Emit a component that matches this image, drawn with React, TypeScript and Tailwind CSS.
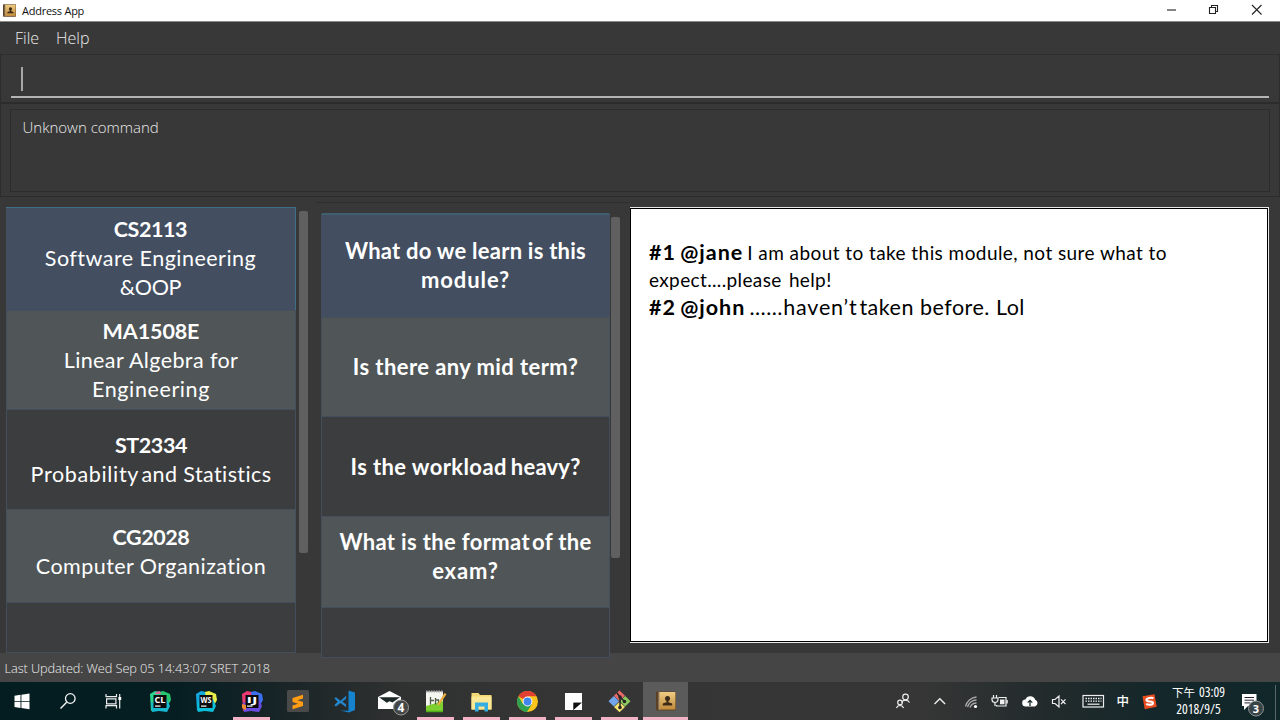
import type { ReactNode } from "react";

function AddressBookIcon({ className }: { className?: string }) {
  return (
    <svg viewBox="0 0 20 20" className={className}>
      <defs>
        <linearGradient id="cover" x1="0" y1="0" x2="0" y2="1">
          <stop offset="0" stopColor="#f0cd84" />
          <stop offset="1" stopColor="#c08a3a" />
        </linearGradient>
      </defs>
      <rect x="0" y="0.5" width="20" height="19" rx="1" fill="#5b4025" />
      <rect x="3.4" y="1" width="16" height="17.6" fill="url(#cover)" />
      <rect x="2.6" y="0.8" width="1" height="18" fill="#c9b08a" />
      <circle cx="11.5" cy="7.6" r="2.5" fill="#3b2a17" />
      <path d="M10.5 9h2v2.2l3.7 1.2v2H6.8v-2l3.7-1.2z" fill="#3b2a17" />
    </svg>
  );
}

type Row = { box: string; lines: ReactNode[] };

const modules: Row[] = [
  {
    box: "h-[103px] bg-[#434e60] pt-[7px] border-t border-r border-t-[#3f6f85] border-r-[#3f6f85]",
    lines: [
      <b className="tracking-[-0.02em]">CS2113</b>,
      <span className="tracking-[0.48px]">Software Engineering</span>,
      <span className="tracking-[-0.3px]">&amp;OOP</span>,
    ],
  },
  {
    box: "h-[99px] bg-[#505657] pt-[6px] border-x border-t border-[#45505c]",
    lines: [
      <b className="tracking-[-0.1px]">MA1508E</b>,
      <span className="tracking-[0.4px]">Linear Algebra for</span>,
      <span className="tracking-[0.6px]">Engineering</span>,
    ],
  },
  {
    box: "h-[100px] bg-[#3c3d3e] pt-[21px] border-x border-t border-[#434e5c]",
    lines: [
      <b className="tracking-[-0.02em]">ST2334</b>,
      <span>
        <span className="tracking-[0.65px]">Probability</span>
        <span className="ml-[2.5px] tracking-[0.4px]">and Statistics</span>
      </span>,
    ],
  },
  {
    box: "h-[93px] bg-[#505657] pt-[13px] border-x border-t border-[#45505c]",
    lines: [
      <b className="tracking-[-0.02em]">CG2028</b>,
      <span className="tracking-[0.45px]">Computer Organization</span>,
    ],
  },
  { box: "h-[51px] bg-[#3c3d3e] border border-[#434e5c]", lines: [] },
];

const questions: Row[] = [
  {
    box: "h-[104px] rounded-t-[2px] bg-[#434e60] pt-[21px] border-t-2 border-t-[#3f5f70]",
    lines: [
      <b className="tracking-[0.24px]">What do we learn is this</b>,
      <b className="tracking-[0.9px]">module?</b>,
    ],
  },
  {
    box: "h-[99px] bg-[#505657] pt-[34px] border-x border-t border-[#45505c]",
    lines: [<b className="tracking-[0.42px]">Is there any mid term?</b>],
  },
  {
    box: "h-[100px] bg-[#3c3d3e] pt-[35px] border-x border-t border-[#434e5c]",
    lines: [
      <b>
        <span className="tracking-[0.4px]">Is the workload</span>
        <span className="ml-[4px] tracking-[0.2px]">heavy?</span>
      </b>,
    ],
  },
  {
    box: "h-[91px] bg-[#505657] pt-[10px] border-x border-t border-[#45505c]",
    lines: [
      <b>
        <span className="tracking-[0.35px]">What is the format</span>
        <span className="ml-[2px] tracking-[0.35px]">of the</span>
      </b>,
      <b className="tracking-[0.9px]">exam?</b>,
    ],
  },
  { box: "h-[51px] bg-[#3c3d3e] border border-[#434e5c]", lines: [] },
];

function List({ rows, className }: { rows: Row[]; className: string }) {
  return (
    <div className={"flex shrink-0 flex-col font-['Lato',sans-serif] leading-[29px] text-white " + className}>
      {rows.map((r, i) => (
        <div key={i} className={"shrink-0 whitespace-nowrap text-center " + r.box}>
          {r.lines.map((l, j) => (
            <div key={j} className="h-[29px]">
              {l}
            </div>
          ))}
        </div>
      ))}
    </div>
  );
}

function Slot({ children, line, className }: { children: ReactNode; line?: boolean; className?: string }) {
  return (
    <div className={"flex h-full w-[46px] shrink-0 flex-col items-center justify-between " + (className ?? "")}>
      <svg viewBox="0 0 46 35" className="h-[35px] w-[46px] shrink-0">
        {children}
      </svg>
      {line && <div className="mr-[1px] h-[3px] w-[37px] bg-[#f3b3c6]" />}
    </div>
  );
}

const badge = "font-['Open_Sans',sans-serif] font-bold";

function Jet({ a, b, c, label }: { a: string; b: string; c: string; label: string }) {
  return (
    <>
      <path d="M13 12l5-3 10 2 4 13-3 5-8-2-7 2z" fill={a} />
      <path d="M22 10l4-1 7 3 1 6-4 7-7-8z" fill={b} />
      <path d="M14 20l8 4 8-7 3 7-3 6-8-1-7 1z" fill={c} />
      <rect x="16.5" y="13" width="13" height="13" fill="#0b0b0d" />
      <text x="17.4" y="21" fontSize="8" textLength="11" lengthAdjust="spacingAndGlyphs" fill="#fff" className={badge}>
        {label}
      </text>
      <rect x="18" y="23.5" width="5.5" height="1.2" fill="#fff" />
    </>
  );
}

function Taskbar() {
  return (
    <div className="flex h-[38px] shrink-0 bg-[linear-gradient(90deg,#031d21_0px,#061e22_180px,#1c2628_300px,#303131_400px,#353535_560px,#363636_920px,#232b2c_1040px,#14272a_1160px,#10272a_1280px)]">
      <Slot className="-ml-[1px]">
        <path d="M15.5 13.700l6-.900v6.100h-6zM22.400 12.700l8.100-1.200v7.400h-8.100zM15.500 19.800h6v6.100l-6-.900zM22.400 19.800h8.100v7.400l-8.100-1.200z" fill="#fff" />
      </Slot>
      <Slot>
        <circle cx="25.300" cy="16.500" r="4.800" fill="none" stroke="#f4f4f4" strokeWidth="1.300" />
        <path d="M21.700 20.200L15.500 26.500" stroke="#f4f4f4" strokeWidth="1.400" />
      </Slot>
      <Slot>
        <path d="M15 12v2.600h10.500V12M15 26.500v-2.800h10.500v2.800M15.600 16.800h9.300v5h-9.300zM28.700 12v14.500" fill="none" stroke="#eee" strokeWidth="1.200" />
        <rect x="27.400" y="15" width="2.800" height="3" fill="#fff" />
      </Slot>
      <Slot>
        <Jet a="#2bd58e" b="#24c86e" c="#16b7cf" label="CL" />
        <path d="M19 10l4-1 1 3h-6z" fill="#e6629c" />
      </Slot>
      <Slot>
        <Jet a="#12a9e0" b="#e9ee4a" c="#0bbfd8" label="WS" />
      </Slot>
      <Slot line>
        <Jet a="#e93a72" b="#3b70f0" c="#6c4be0" label="IJ" />
        <path d="M13 22l4 1v5l-4-2z" fill="#f08a30" />
      </Slot>
      <Slot>
        <rect x="12" y="8" width="22" height="22" rx="1.500" fill="#4a4a4a" />
        <path d="M17.500 16l10.500-3.200v3.700l-5.500 1.800 5.500 1.700v3.900l-10.500 3.300v-3.700l5.600-1.800-5.600-1.800z" fill="#ff9c12" />
      </Slot>
      <Slot>
        <path d="M27.500 8.500l6.500 2v17.500l-6 2.500-9-2 8.500.300z" fill="#1583d0" />
        <path d="M13.300 16.300l1.700-1.100 4.500 3.600 5.600-5v11.500l-5.600-4.400-4.500 3.500-1.700-1.100 3.300-3.500zM25 16.700l-3.600 2.900 3.600 2.900z" fill="#2387cf" fillRule="evenodd" />
      </Slot>
      <Slot>
        <path d="M11 15l11.500-6L34 15v12H11z" fill="#fff" />
        <path d="M12 15.300h21l-7.500 5.200-3-1.300-2.700 1.500z" fill="#1f2829" />
        <circle cx="34" cy="25.500" r="7.500" fill="#434747" stroke="#999" strokeWidth="1" />
        <text x="34" y="29.800" textAnchor="middle" fontSize="12" fill="#fff" className={badge}>4</text>
      </Slot>
      <Slot line>
        <rect x="13" y="9.500" width="17" height="20.500" fill="#f4f6ef" />
        <path d="M13 24l17-5v11H13z" fill="#7ed030" />
        <path d="M13 29.500h17" stroke="#4fae18" strokeWidth="1.500" />
        <path d="M13 9.500h17" stroke="#aaa" strokeWidth="2" strokeDasharray="1.500 1" />
        <path d="M17.500 15v7.500M17.500 18.500h3.500M22.500 16v6.500M22.500 18h3v4" fill="none" stroke="#505a48" strokeWidth="1.300" />
        <path d="M31.500 11l2 1.300-7 10.500-2 1 .300-2.200z" fill="#e9ae3e" />
      </Slot>
      <Slot line>
        <path d="M12.500 11h7l1.500 2h11.500v14.500h-20z" fill="#f4d775" />
        <path d="M12.500 14.500h20v13h-20z" fill="#fce794" />
        <path d="M16 29.500v-9h13v9h-3.500v-5h-6v5z" fill="#35aee2" />
      </Slot>
      <Slot line>
        <circle cx="22.500" cy="19.500" r="10.500" fill="#fbc51c" />
        <path d="M22.500 19.500L13.400 14.250A10.500 10.500 0 0 1 31.600 14.250H22.500z" fill="#e13f32" />
        <path d="M13.400 14.250A10.500 10.500 0 0 0 22 30L27 22 22.500 19.500l-4.500 2.600z" fill="#2fa14f" />
        <circle cx="22.500" cy="19.500" r="4.900" fill="#f8f8f8" />
        <circle cx="22.500" cy="19.500" r="3.900" fill="#4285ee" />
      </Slot>
      <Slot line>
        <path d="M14 11h17v9.500h-8.500V28H14z" fill="#fff" />
        <path d="M22.500 21h8l-8 7z" fill="#111" />
        <path d="M31 20.500V28h-8.500z" fill="#fff" />
      </Slot>
      <Slot line>
        <path d="M22.500 8.500l5.500 5.300-5.500 5.200-5.500-5.200z" fill="#ec6a67" />
        <path d="M16.800 14l5.300 5.200-5.300 5.300-5.300-5.300z" fill="#72a5ec" />
        <path d="M28.200 14l5.300 5.200-5.300 5.300-5.300-5.300z" fill="#8ecb5e" />
        <path d="M22.500 19.800l5.500 5.200-5.500 5.300-5.500-5.300z" fill="#f2e071" />
        <path d="M20 11l3 4v11M23 15l4.500 4.500" stroke="#252525" strokeWidth="1.500" fill="none" />
        <circle cx="23" cy="15" r="1.800" fill="#252525" />
        <circle cx="27.500" cy="19.500" r="1.800" fill="#252525" />
        <circle cx="23" cy="25.500" r="1.800" fill="#252525" />
      </Slot>
      <div className="flex h-full w-[45px] shrink-0 flex-col items-center justify-between bg-[#5b5b5b] pt-[9px]">
        <AddressBookIcon className="h-5 w-5" />
        <div className="h-[3px] w-full bg-[#f3b3c6]" />
      </div>

      <div className="flex flex-1 justify-end text-white">
        <svg viewBox="890 682 270 38" className="h-[38px] w-[270px] shrink-0">
          <g fill="none" stroke="#eee" strokeWidth="1.200">
            <circle cx="905.500" cy="697" r="2.800" />
            <path d="M901.500 702.500a4.500 4.500 0 0 1 8 0" />
            <circle cx="900" cy="702.500" r="2.300" />
            <path d="M896.500 708a3.700 3.700 0 0 1 7 0" />
            <path d="M934.500 704l5.300-5.300 5.300 5.300" strokeWidth="1.400" />
          </g>
          <g fill="none" stroke="#aaa" strokeWidth="1.300">
            <path d="M965.500 706.500a12 12 0 0 1 11-9.500" />
            <path d="M967.500 707a9.500 9.500 0 0 1 9-7" />
            <path d="M970 707.500a7 7 0 0 1 6.500-4.500" />
          </g>
          <circle cx="975.500" cy="706.500" r="1.600" fill="#fff" />
          <g fill="none" stroke="#eee" strokeWidth="1.200">
            <path d="M998.500 697.500h7.500v8.500h-9.500v-1" />
            <path d="M993.500 695v2.500M996.500 695v2.500M992 698h6v1.500a3 3 0 0 1-6 0zM995 702.500v3.500" />
            <path d="M1007 700v3.500" strokeWidth="1.500" />
          </g>
          <rect x="1000" y="699.500" width="4.500" height="4.800" fill="#eee" />
          <path d="M1026 706.500a3.500 3.500 0 0 1-.600-7 5.200 5.200 0 0 1 9.800.200 3.600 3.600 0 0 1-.200 6.800z" fill="#fff" />
          <path d="M1030 706v-5M1027.700 702.600l2.300-2.300 2.300 2.300" stroke="#1b2b2c" strokeWidth="1.300" fill="none" />
          <path d="M1052.500 699.500h2.500l4-3.500v11l-4-3.500h-2.500zM1061 699.300l4.500 4.700M1065.500 699.300L1061 704" fill="none" stroke="#eee" strokeWidth="1.200" />
          <rect x="1083" y="695.500" width="20.500" height="11.500" fill="none" stroke="#eee" strokeWidth="1.200" />
          <path d="M1085.500 698.500h16M1085.500 701.200h16" stroke="#eee" strokeWidth="1.300" strokeDasharray="1.500 1" />
          <path d="M1087.500 704.200h12" stroke="#eee" strokeWidth="1.200" />
          <text x="1116.500" y="705.500" fontSize="12.500" fontWeight="500" fill="#fff" className="font-['Noto_Sans_CJK_SC',sans-serif]">中</text>
          <path d="M1142.500 696.300l12-2 2.200 12.500-12 2.400z" fill="#e94d1f" />
          <path d="M1153.500 698.200c-2-1-7-.300-7 1.700 0 2.300 6.500.800 6.500 3 0 2-4 2.300-6.800 1.200" fill="none" stroke="#fff" strokeWidth="2.100" />
        </svg>
        <div className="flex w-[76px] shrink-0 flex-col items-center pt-[2px] pl-[1px] text-[13.5px] leading-[17px] font-['Open_Sans',sans-serif] [font-stretch:75%]">
          <div className="flex items-baseline gap-[4px] whitespace-nowrap">
            <span className="font-['Noto_Sans_CJK_TC',sans-serif] text-[11.5px] leading-[17px]">下午</span>
            <span>03:09</span>
          </div>
          <div>2018/9/5</div>
        </div>
        <svg viewBox="1236 682 44 38" className="h-[38px] w-[44px] shrink-0">
          <path d="M1242 694h14.500v12h-8.500l-4 4v-4h-2z" fill="#fff" />
          <path d="M1244.500 697.500h9.500M1244.500 700.200h9.500M1244.500 702.900h6" stroke="#223" strokeWidth="1" />
          <circle cx="1256" cy="708.500" r="7.500" fill="#394446" stroke="#8d9394" strokeWidth="1" />
          <text x="1256" y="712.500" textAnchor="middle" fontSize="11" fill="#fff" className={badge}>3</text>
          <path d="M1275.500 685v35" stroke="#59686a" strokeWidth="1" />
        </svg>
      </div>
    </div>
  );
}

export default function App() {
  return (
    <div className="flex h-[720px] w-[1280px] flex-col overflow-hidden bg-[#383838] font-['Open_Sans',sans-serif]">
      <div className="flex h-[22px] shrink-0 items-center border-b border-[#8a8a8a] bg-white pl-[3px]">
        <AddressBookIcon className="h-[13px] w-[13px]" />
        <span className="ml-[6px] text-[11px] leading-none tracking-[-0.25px] text-[#111]">Address App</span>
        <svg viewBox="1160 0 110 21" className="mr-[10px] ml-auto h-[21px] w-[110px]" fill="none" stroke="#222" strokeWidth="1.1">
          <path d="M1167 10h9" />
          <path d="M1209.5 7.5h6v6h-6zM1211.5 7v-1.500h6v6h-1.500" />
          <path d="M1252 5l9.500 9.500M1261.500 5l-9.500 9.500" />
        </svg>
      </div>
      <div className="flex h-[33px] shrink-0 items-center gap-[17px] border-b border-[#2e2e2e] pl-[15px] text-[16px] font-light text-[#ececec]">
        <span>File</span>
        <span>Help</span>
      </div>
      <div className="h-[49px] shrink-0 border-x border-b-2 border-[#2c2c2c] px-[10px] pt-[12px]">
        <div className="h-[31px] border-b-2 border-[#b4b4b4] pl-[10px]">
          <div className="h-[24px] w-[2px] bg-[#a8a8a8]" />
        </div>
      </div>
      <div className="h-[93px] shrink-0 border-x border-b border-[#2c2c2c] px-[9px] pt-[5px]">
        <div className="h-[83px] border border-[#2c2c2c] pt-[7px] pl-[11.5px] text-[15px] leading-[20px] font-light text-[#eaeaea]">
          Unknown command
        </div>
      </div>
      <div className="flex h-[456px] shrink-0 items-start pl-[6px]">
        <List rows={modules} className="mt-[10px] w-[290px] text-[21.5px]" />
        <div className="mt-[14px] ml-[3px] h-[342px] w-[9px] rounded-[2px] bg-[#606060]" />
        <div className="mt-[5px] ml-[8px] flex w-[314px] flex-col border-t border-[#2e2e2e] pt-[10px] pl-[5px]">
          <div className="flex">
            <List rows={questions} className="relative w-[289px] text-[22px]" />
            <div className="mt-[4px] ml-[1px] h-[341px] w-[9px] rounded-[2px] bg-[#606060]" />
          </div>
        </div>
        <div className="mt-[10px] h-[436px] w-[639px] border border-l-0 border-[#e8e8e8]">
          <div className="h-full w-[638px] border border-black bg-white pt-[30px] pl-[18px] font-['Lato',sans-serif] whitespace-nowrap text-black">
            <div className="flex h-[27px] items-baseline gap-[3px]">
              <b className="text-[21.5px] leading-[27px] tracking-[1px] [word-spacing:-2px]">#1 @jane</b>
              <span className="ml-[1px] text-[19px] tracking-[0.43px]">I am about to take this module, not sure what to</span>
            </div>
            <div className="h-[27px] text-[19px] leading-[27px] tracking-[0.37px] [word-spacing:2px]">expect....please help!</div>
            <div className="flex h-[29px] items-baseline text-[21.5px] leading-[29px]">
              <b className="tracking-[1px] [word-spacing:-2px]">#2 @john</b>
              <span className="ml-[4px] tracking-[0.8px]">……haven’t</span>
              <span className="ml-[2px] tracking-[0.5px]">taken before. Lol</span>
            </div>
          </div>
        </div>
      </div>
      <div className="h-[29px] shrink-0 bg-[#454545] pl-[4.5px] text-[12.8px] leading-[30px] font-light tracking-[-0.1px] text-[#efefef]">
        Last Updated: Wed Sep 05 14:43:07 SRET 2018
      </div>
      <Taskbar />
    </div>
  );
}
